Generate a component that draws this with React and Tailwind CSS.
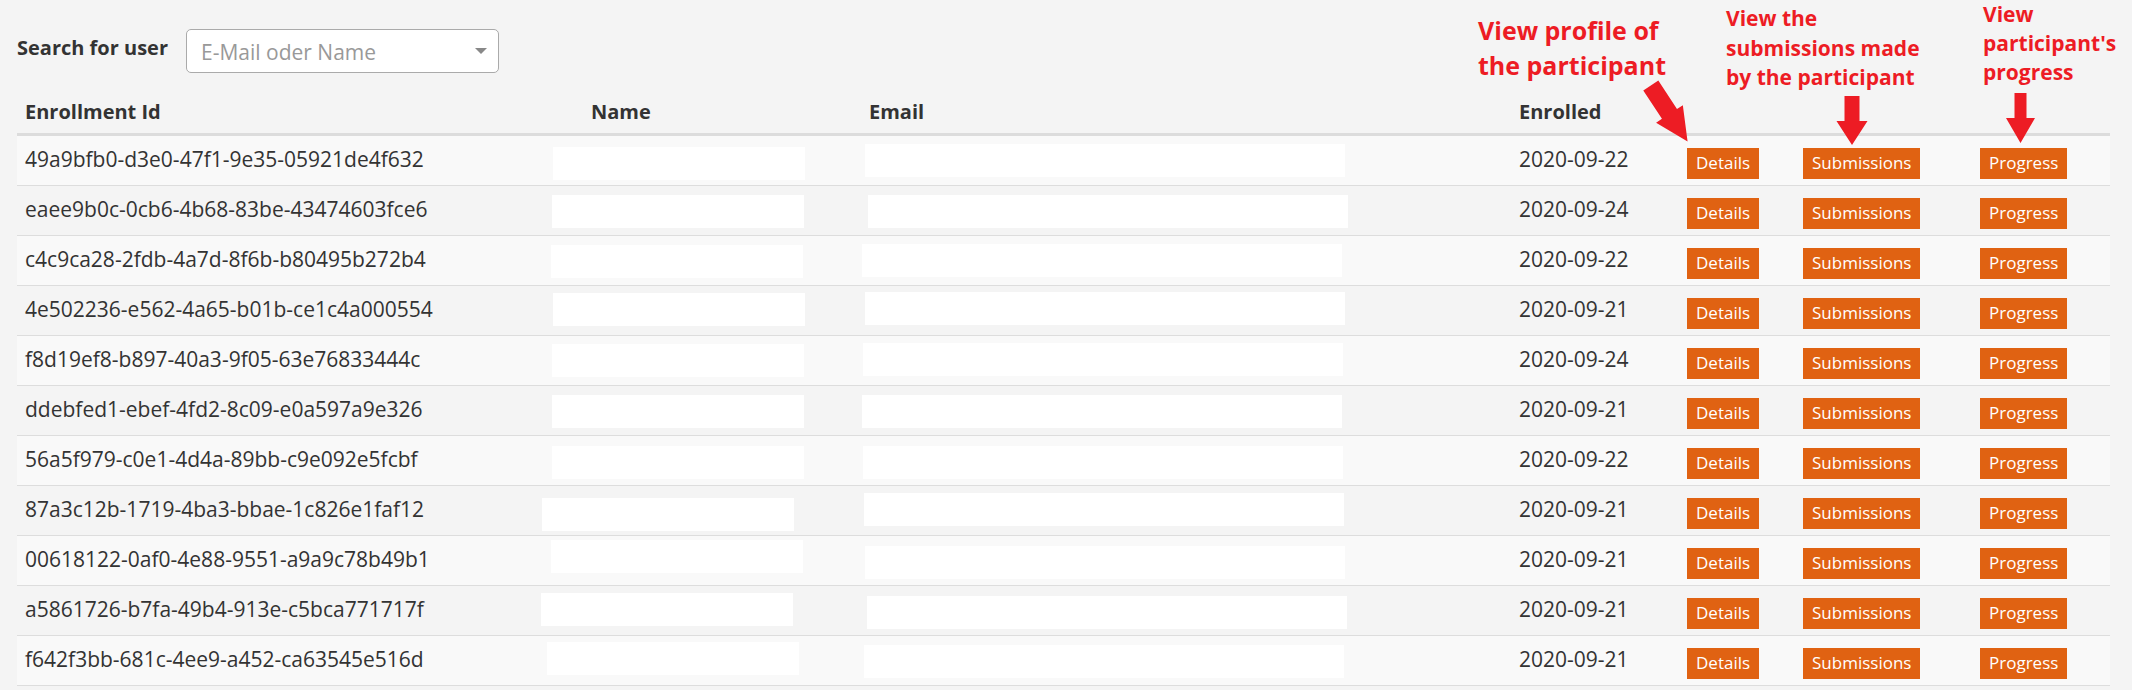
import React from 'react';

const rows = [
  { id: '49a9bfb0-d3e0-47f1-9e35-05921de4f632', date: '2020-09-22', name: 'ml-[-30px] mt-[11px]', email: 'ml-[4px] mt-[8px]' },
  { id: 'eaee9b0c-0cb6-4b68-83be-43474603fce6', date: '2020-09-24', name: 'ml-[-31px] mt-[9px]', email: 'ml-[7px] mt-[9px]' },
  { id: 'c4c9ca28-2fdb-4a7d-8f6b-b80495b272b4', date: '2020-09-22', name: 'ml-[-32px] mt-[9px]', email: 'ml-[1px] mt-[8px]' },
  { id: '4e502236-e562-4a65-b01b-ce1c4a000554', date: '2020-09-21', name: 'ml-[-30px] mt-[7px]', email: 'ml-[4px] mt-[6px]' },
  { id: 'f8d19ef8-b897-40a3-9f05-63e76833444c', date: '2020-09-24', name: 'ml-[-31px] mt-[8px]', email: 'ml-[2px] mt-[7px]' },
  { id: 'ddebfed1-ebef-4fd2-8c09-e0a597a9e326', date: '2020-09-21', name: 'ml-[-31px] mt-[9px]', email: 'ml-[1px] mt-[9px]' },
  { id: '56a5f979-c0e1-4d4a-89bb-c9e092e5fcbf', date: '2020-09-22', name: 'ml-[-31px] mt-[10px]', email: 'ml-[2px] mt-[10px]' },
  { id: '87a3c12b-1719-4ba3-bbae-1c826e1faf12', date: '2020-09-21', name: 'ml-[-41px] mt-[12px]', email: 'ml-[3px] mt-[7px]' },
  { id: '00618122-0af0-4e88-9551-a9a9c78b49b1', date: '2020-09-21', name: 'ml-[-32px] mt-[4px]', email: 'ml-[4px] mt-[10px]' },
  { id: 'a5861726-b7fa-49b4-913e-c5bca771717f', date: '2020-09-21', name: 'ml-[-42px] mt-[7px]', email: 'ml-[6px] mt-[10px]' },
  { id: 'f642f3bb-681c-4ee9-a452-ca63545e516d', date: '2020-09-21', name: 'ml-[-36px] mt-[6px]', email: 'ml-[3px] mt-[9px]' },
];

const cols = 'grid grid-cols-[566px_278px_650px_168px_116px_177px_138px]';

function Btn({ children }) {
  return (
    <span className="inline-flex h-[31px] items-center bg-[#e06212] px-[9px] text-[17px] text-white">
      {children}
    </span>
  );
}

export default function App() {
  return (
    <div className="relative h-[690px] w-[2132px] overflow-hidden bg-[#f4f4f4] font-['Open_Sans',sans-serif] text-[#333]">
      <div className="pl-[17px] pt-[29px]">
        {/* Search */}
        <div className="flex items-start">
          <label className="mt-[5px] w-[169px] text-[20px] font-bold leading-[28px]">Search for user</label>
          <div className="flex h-[44px] w-[313px] items-center rounded-[5px] border border-[#aaa] bg-white pl-[14px]">
            <span className="mt-[2px] text-[21px] leading-[28px] text-[#999]">E-Mail oder Name</span>
            <span className="ml-auto mr-[11px] h-0 w-0 border-x-[6px] border-t-[6px] border-x-transparent border-t-[#888]" />
          </div>
        </div>

        {/* Table */}
        <div className="mt-[17px] w-[2093px]">
          <div className={`${cols} border-b-[3px] border-[#dcdcdc] pb-[7px] pt-[8px] text-[20px] font-bold leading-[28px]`}>
            <div className="px-[8px]">Enrollment Id</div>
            <div className="px-[8px]">Name</div>
            <div className="px-[8px]">Email</div>
            <div className="px-[8px]">Enrolled</div>
            <div />
            <div />
            <div />
          </div>
          {rows.map((r, i) => (
            <div
              key={r.id}
              className={`${cols} h-[50px] border-b border-[#ddd] text-[21px] leading-[28px] ${i % 2 === 0 ? 'bg-[#f9f9f9]' : ''}`}
            >
              <div className="pl-[8px] pt-[9px]">{r.id}</div>
              <div>
                <div className={`h-[33px] w-[252px] bg-white ${r.name}`} />
              </div>
              <div>
                <div className={`h-[33px] w-[480px] bg-white ${r.email}`} />
              </div>
              <div className="pl-[8px] pt-[9px]">{r.date}</div>
              <div className="pl-[8px] pt-[11px]"><Btn>Details</Btn></div>
              <div className="pl-[8px] pt-[11px]"><Btn>Submissions</Btn></div>
              <div className="pl-[8px] pt-[11px]"><Btn>Progress</Btn></div>
            </div>
          ))}
        </div>
      </div>

      {/* Annotations */}
      <div className="absolute left-[1478px] top-[13px] whitespace-nowrap text-[25px] font-bold leading-[35px] text-[#ed1c24]">
        View profile of<br />the participant
      </div>
      <div className="absolute left-[1726px] top-[4px] whitespace-nowrap text-[21px] font-bold leading-[29.5px] text-[#ed1c24]">
        View the<br />submissions made<br />by the participant
      </div>
      <div className="absolute left-[1983px] top-0 whitespace-nowrap text-[21px] font-bold leading-[29px] text-[#ed1c24]">
        View<br />participant's<br />progress
      </div>
      <svg className="pointer-events-none absolute left-0 top-0" width="2132" height="160" viewBox="0 0 2132 160">
        <polygon
          fill="#ed1c24"
          transform="translate(1650.8 85.5) rotate(-33.3)"
          points="-9,0 9,0 9,34 16,34 0,67 -16,34 -9,34"
        />
        <polygon fill="#ed1c24" points="1844.5,96 1859.5,96 1859.5,121 1867.5,121 1852,145 1836.5,121 1844.5,121" />
        <polygon fill="#ed1c24" points="2014.5,93 2026.5,93 2026.5,118 2035,118 2020.5,143 2006,118 2014.5,118" />
      </svg>
    </div>
  );
}
